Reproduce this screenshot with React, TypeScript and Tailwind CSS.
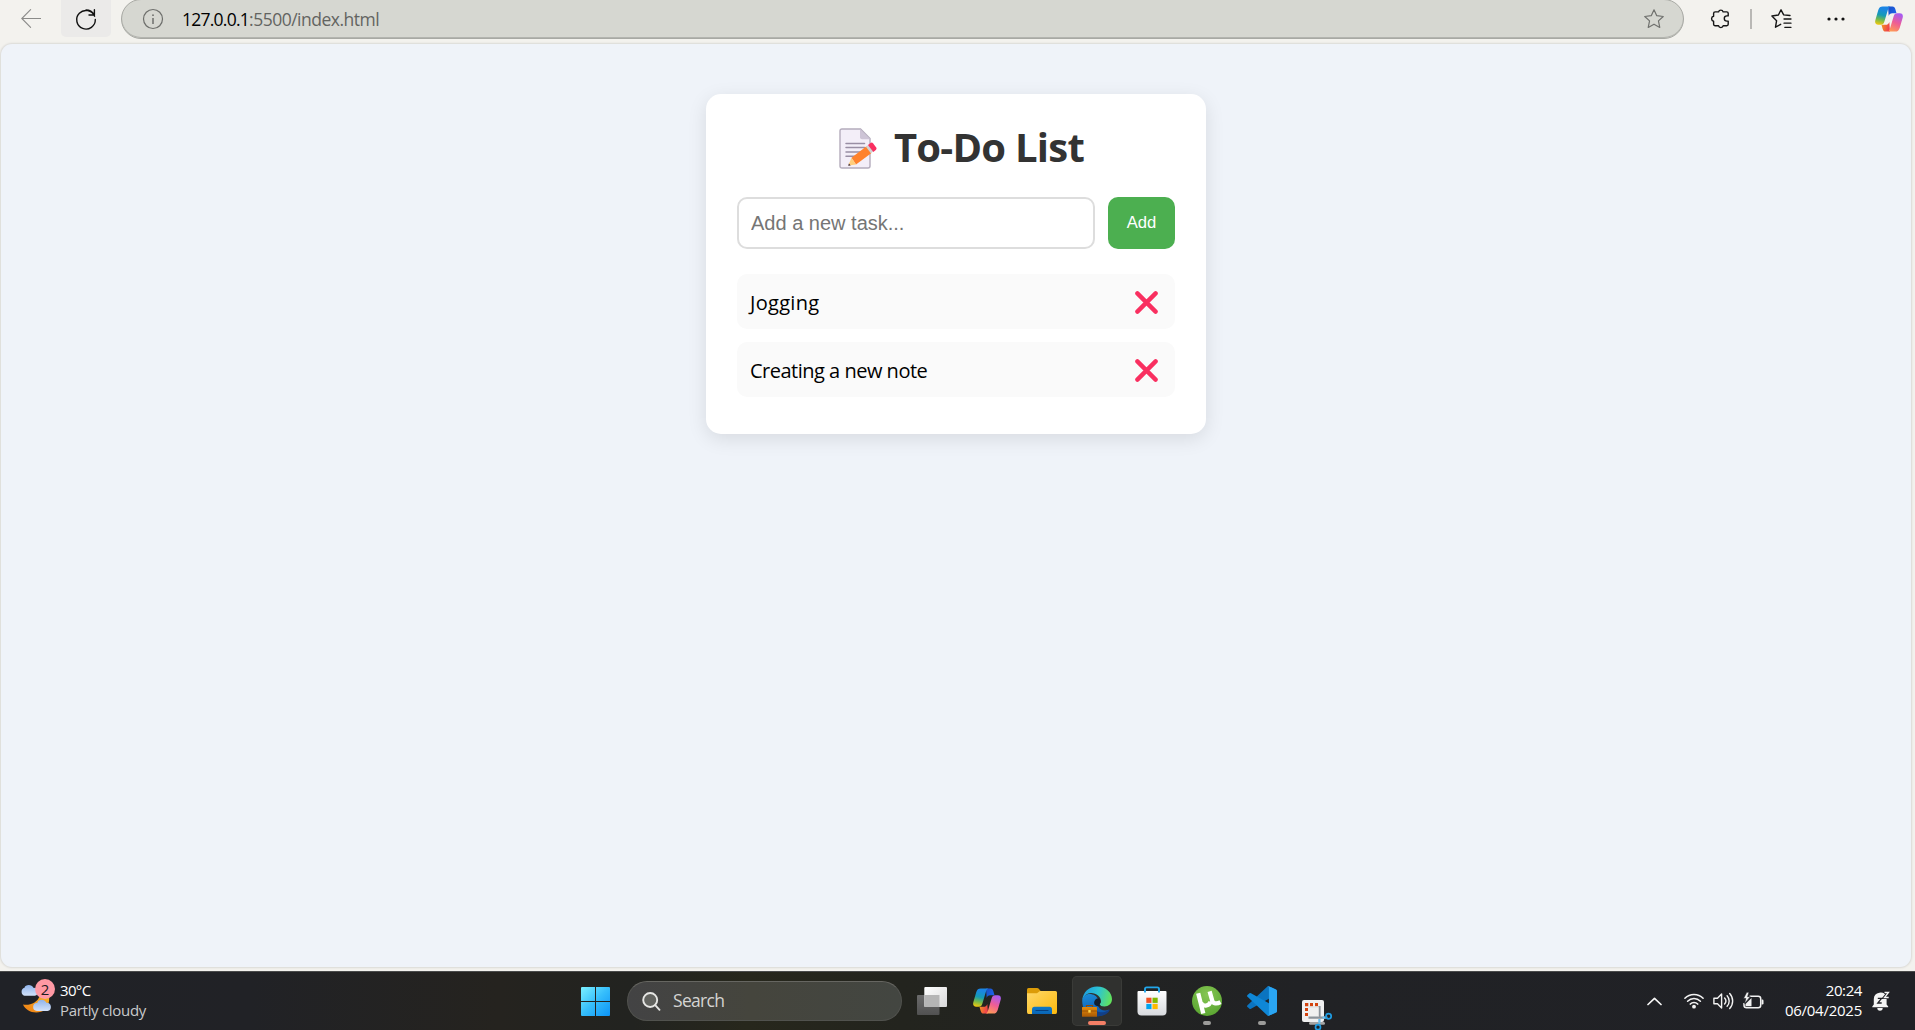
import type { ReactNode } from "react";

/* ---------- Browser toolbar icons ---------- */

function BackIcon() {
  return (
    <svg className="h-5 w-5" viewBox="0 0 20 20" fill="none" stroke="#8b8b89" strokeWidth="1.1" strokeLinecap="round">
      <path d="M0.8 9.5H20M9.6 0.7L0.8 9.5l8.8 8.8" />
    </svg>
  );
}

function ReloadIcon() {
  return (
    <svg className="h-5 w-5 overflow-visible" viewBox="0 0 20 20" fill="none" stroke="#111" strokeWidth="1.4" strokeLinecap="round" strokeLinejoin="round">
      <path d="M18.6 7.2A9.3 9.3 0 1 0 19.3 10.4M18.4 0.8v5.2h-5.4M18.2 5.8A9.3 9.3 0 0 0 10 0.9" />
    </svg>
  );
}

function InfoIcon() {
  return (
    <svg className="h-5 w-5 overflow-visible" viewBox="0 0 20 20" fill="none" stroke="#6d6e6b" strokeWidth="1.2">
      <circle cx="10" cy="10" r="9.5" />
      <path d="M10 9v6" strokeWidth="1.5" />
      <circle cx="10" cy="6.2" r="0.9" fill="#6d6e6b" stroke="none" />
    </svg>
  );
}

function StarIcon() {
  return (
    <svg className="h-5 w-5 overflow-visible" viewBox="0 0 20 20" fill="none" stroke="#70716e" strokeWidth="1.2" strokeLinejoin="round">
      <path d="M10 0.8l2.75 5.9 6.5.8-4.8 4.4 1.3 6.5L10 15.2l-5.75 3.2 1.3-6.5-4.8-4.4 6.5-.8z" />
    </svg>
  );
}

function PuzzleIcon() {
  return (
    <svg className="h-5 w-[18px] overflow-visible" viewBox="0 0 18 20" fill="none" stroke="#151515" strokeWidth="1.4" strokeLinejoin="round">
      <path d="M4.200 2.900h3.400a2.300 2.300 0 0 1 4.500 0h3.700q1.400 0 1.400 1.400v2.600h-1.300a2.600 2.600 0 0 0 0 5.200h1.300v3.200q0 1.400-1.400 1.400h-3.600a2.400 2.400 0 0 1-4.700 0H4q-1.400 0-1.400-1.400v-3.100a2.500 2.500 0 0 1 0-4.900V4.400q0-1.500 1.600-1.500z" />
    </svg>
  );
}

function FavoritesIcon() {
  return (
    <svg className="h-5 w-5 overflow-visible" viewBox="0 0 20 20" fill="none" stroke="#151515" strokeWidth="1.4" strokeLinejoin="round" strokeLinecap="round">
      <path d="M19 6.500l-6.300-.6L10 0.800 7.400 6 0.900 7l4.700 4.700-1.100 6.500 5.200-2.900" />
      <path d="M13 10h7M13 14.200h7M13.800 18.300h6.200" strokeWidth="1.300" />
    </svg>
  );
}

function DotsIcon() {
  return (
    <svg className="h-1 w-[18px]" viewBox="0 0 18 4" fill="#111">
      <circle cx="2" cy="2" r="1.6" />
      <circle cx="9" cy="2" r="1.6" />
      <circle cx="16" cy="2" r="1.6" />
    </svg>
  );
}

function CopilotIcon({ id, className }: { id: string; className: string }) {
  return (
    <svg className={className} viewBox="0 0 28 26">
      <defs>
        <linearGradient id={`${id}a`} x1="0.4" y1="0" x2="0.2" y2="1">
          <stop offset="0.1" stopColor="#1b86e4" />
          <stop offset="0.45" stopColor="#159bb5" />
          <stop offset="0.7" stopColor="#6fb850" />
          <stop offset="1" stopColor="#f5c90a" />
        </linearGradient>
        <linearGradient id={`${id}b`} x1="0.7" y1="0" x2="0.3" y2="1">
          <stop offset="0" stopColor="#a75bf2" />
          <stop offset="0.5" stopColor="#ee5d95" />
          <stop offset="1" stopColor="#ff9a55" />
        </linearGradient>
        <linearGradient id={`${id}c`} x1="0" y1="0" x2="1" y2="0.6">
          <stop offset="0" stopColor="#1a4fc4" />
          <stop offset="1" stopColor="#1d63ea" />
        </linearGradient>
        <linearGradient id={`${id}d`} x1="0" y1="0" x2="1" y2="0.3">
          <stop offset="0" stopColor="#f59a1c" />
          <stop offset="1" stopColor="#ee3e4d" />
        </linearGradient>
      </defs>
      <path d="M13 0.4h4.4c1.8 0 2.4 1 2.9 2.6l1.2 4.2h-4.2c-2 0-3 .9-3.6 2.8z" fill={`url(#${id}c)`} />
      <path d="M15 25.6h-4.3c-1.8 0-2.5-1-3-2.6l-1.2-4.2h4.2c2 0 3-.9 3.6-2.8z" fill={`url(#${id}d)`} />
      <path d="M7.7 0.4h7.8c-1.4.4-2 1.5-2.5 3.1l-3.6 12c-.7 2.3-1.6 3.2-3.6 3.2H3.2C.5 18.7-.4 16.700.4 14.100L3.300 4C4.100 1.500 5.300.400 7.700.400z" fill={`url(#${id}a)`} />
      <path d="M20.300 25.600h-7.800c1.400-.4 2-1.500 2.500-3.100l3.600-12c.7-2.300 1.600-3.200 3.600-3.200h2.600c2.700 0 3.600 2 2.800 4.600L24.700 22c-.8 2.500-2 3.600-4.400 3.600z" fill={`url(#${id}b)`} />
    </svg>
  );
}

/* ---------- To-do card icons ---------- */

function MemoIcon() {
  return (
    <svg className="h-[41px] w-[39px] shrink-0" viewBox="0 0 39 41">
      <path d="M3 1h18.500l9.500 9.500V38q0 2-2 2H3q-2 0-2-2V3q0-2 2-2z" fill="#f3eef8" stroke="#b4acbc" strokeWidth="1.4" />
      <path d="M21 1l10.300 10.300H23q-2 0-2-2z" fill="#cdc4d6" />
      <path d="M7 15.400h18.500M7 19.600h18.500M7 23.900h16M7 28.200h10" stroke="#998ea4" strokeWidth="1.5" strokeLinecap="round" />
      <path d="M12.500 29.800L27.500 18.300l5 6.600L17 36.500z" fill="#ff822d" />
      <path d="M12.500 29.800L9.600 36.700l.3.700L17 36.500z" fill="#ffce7c" />
      <path d="M9.900 35.500l1.800 2-2.500.2z" fill="#3b2a3a" />
      <path d="M26.900 18.700l2.500-2 5 6.600-2.500 1.900z" fill="#d3d3d3" />
      <path d="M29 16.900l2.500-1.900q1.500-1 2.700.5l3 4q1 1.400-.4 2.500l-2.500 1.900z" fill="#f92f60" />
    </svg>
  );
}

function CrossIcon() {
  return (
    <svg className="h-[23px] w-[23px]" viewBox="0 0 23 23" stroke="#f92f60" strokeWidth="4.400" strokeLinecap="round">
      <path d="M2.400 2.400l18.200 18.200M20.600 2.400L2.400 20.600" />
    </svg>
  );
}

/* ---------- Taskbar icons ---------- */

function WeatherIcon() {
  return (
    <svg className="h-[36px] w-[34px]" viewBox="0 0 34 36">
      <defs>
        <linearGradient id="moon" x1="1" y1="0" x2="0" y2="1">
          <stop offset="0" stopColor="#f8b32b" />
          <stop offset="1" stopColor="#f07f13" />
        </linearGradient>
        <linearGradient id="cloud" x1="0" y1="0" x2="0" y2="1">
          <stop offset="0" stopColor="#8fb3ea" />
          <stop offset="1" stopColor="#d3e2fa" />
        </linearGradient>
      </defs>
      <path d="M3 22.500C9 23.800 18 21 20 13l9 1c1 7-2 14-8 15.800C13 32 5.500 28.500 3 22.500z" fill="url(#moon)" />
      <path d="M4.500 13.800a4.200 4.200 0 0 1 0-8C5 2.300 12 1.800 13.300 5.800a4.100 4.100 0 0 1 1.500 8z" fill="url(#cloud)" />
      <path d="M17 29a4 4 0 0 1 .3-8c1-4.200 7.500-4.200 9-.3a4.200 4.200 0 0 1 1.200 8.300z" fill="url(#cloud)" />
    </svg>
  );
}

function StartIcon() {
  return (
    <svg className="h-[29px] w-[29px]" viewBox="0 0 29 29">
      <defs>
        <linearGradient id="win" gradientUnits="userSpaceOnUse" x1="0" y1="0" x2="29" y2="29">
          <stop offset="0" stopColor="#7cf0ff" />
          <stop offset="0.5" stopColor="#35bdfb" />
          <stop offset="1" stopColor="#0c93f7" />
        </linearGradient>
      </defs>
      <path d="M1 0h13v14H0V1q0-1 1-1zM15 0h13q1 0 1 1v13H15zM0 15h14v14H1q-1 0-1-1zM15 15h14v13q0 1-1 1H15z" fill="url(#win)" />
    </svg>
  );
}

function SearchIcon() {
  return (
    <svg className="h-[19px] w-[19px]" viewBox="0 0 19 19" fill="none" stroke="#e6e6e4" strokeWidth="1.900" strokeLinecap="round">
      <circle cx="8.200" cy="8" r="7" fill="#62635f" />
      <path d="M13.200 13.200l4.300 4.600" />
    </svg>
  );
}

function TaskViewIcon() {
  return (
    <svg className="h-[30px] w-[30px]" viewBox="0 0 30 30">
      <defs>
        <linearGradient id="tv" x1="0" y1="0" x2="1" y2="1">
          <stop offset="0" stopColor="#fff" />
          <stop offset="1" stopColor="#d9d9d9" />
        </linearGradient>
        <linearGradient id="tvb" x1="0" y1="0" x2="0" y2="1">
          <stop offset="0" stopColor="#6b6b6b" />
          <stop offset="1" stopColor="#515151" />
        </linearGradient>
      </defs>
      <rect x="0" y="9" width="22.500" height="20" rx="1" fill="url(#tvb)" />
      <rect x="7.300" y="1" width="22.700" height="20" rx="1" fill="url(#tv)" />
      <path d="M7.300 9h15.200v12H8.300q-1 0-1-1z" fill="#b5b5b5" />
    </svg>
  );
}

function FolderIcon() {
  return (
    <svg className="h-[28px] w-[30px]" viewBox="0 0 30 28">
      <defs>
        <linearGradient id="fold" x1="0" y1="0" x2="1" y2="1">
          <stop offset="0" stopColor="#ffd869" />
          <stop offset="1" stopColor="#fbb90d" />
        </linearGradient>
        <linearGradient id="foldb" x1="0" y1="0" x2="0" y2="1">
          <stop offset="0" stopColor="#0d7ac9" />
          <stop offset="1" stopColor="#0a64b4" />
        </linearGradient>
      </defs>
      <path d="M1.500 1h8.600q1 0 1.700.8l2.200 2.700v3H0v-5Q0 1 1.500 1z" fill="#dc9c08" />
      <path d="M0 6.200h10l3-2.200h15.500Q30 4 30 5.500V25q0 2-1.500 2h-27Q0 27 0 25z" fill="url(#fold)" />
      <path d="M5 27v-4.800q0-2.500 2.500-2.500h15q2.500 0 2.500 2.500V27z" fill="url(#foldb)" />
      <path d="M9 23.500h12" stroke="#053f80" strokeWidth="1.200" strokeLinecap="round" />
    </svg>
  );
}

function EdgeIcon() {
  return (
    <svg className="h-[31px] w-[30px]" viewBox="0 0 30 31">
      <defs>
        <linearGradient id="eg1" x1="0" y1="0.300" x2="1" y2="0.500">
          <stop offset="0" stopColor="#1c9be0" />
          <stop offset="0.500" stopColor="#2cc3d4" />
          <stop offset="1" stopColor="#62e35c" />
        </linearGradient>
        <linearGradient id="eg2" x1="0" y1="0" x2="0.300" y2="1">
          <stop offset="0" stopColor="#1b8fdc" />
          <stop offset="1" stopColor="#0d55ac" />
        </linearGradient>
        <linearGradient id="eg3" x1="0" y1="0" x2="0" y2="1">
          <stop offset="0" stopColor="#e58b0c" />
          <stop offset="1" stopColor="#a95a05" />
        </linearGradient>
      </defs>
      <path d="M0.200 14.500C.2 22 3.500 27 9 29.500c6 2 14 .8 18.300-6-4.500 2.500-9.500.5-11-3-1.500-3-.8-5 .2-6.500-1.500-4-5-6-9-6-3.500 0-6.500 2.500-7.300 6.500z" fill="url(#eg2)" />
      <path d="M11.500 20c1.500 6.500 9 8.500 15.300 3.700.8-.4 1 .1.700.8C25 29 20 30.500 15 30z" fill="#123f86" />
      <path d="M0.200 14.500C1 6 7 .5 15 .5c9 0 15 6.200 15 12.800 0 4.500-3.500 7.200-7.500 7.200-2.800 0-4.800-1-4.800-2 0-.8 1.200-1.400 1.200-3.600 0-4-4.300-8-9.900-8-3.800 0-7.500 3-8.800 7.600z" fill="url(#eg1)" />
      <path d="M12.200 17.500c-.3-2.800 1.500-5 4-5.200 1.500.3 2.600 2.200 2.400 3.600-.2 1.300-1 1.800-1 2.600 0 .6.600 1 1.400 1.300-2.800 1.200-6.400.200-6.800-2.300z" fill="#141f2e" />
      <path d="M4.500 22v-2.500h6V22" fill="none" stroke="#8e4b05" strokeWidth="1.200" />
      <rect x="0" y="21" width="15" height="9.800" rx="0.600" fill="url(#eg3)" />
      <path d="M0 25h15" stroke="#8a4a04" strokeWidth="0.800" />
      <rect x="6.300" y="24" width="2.400" height="2.600" fill="#ffd54a" />
    </svg>
  );
}

function StoreIcon() {
  return (
    <svg className="h-[30px] w-[30px]" viewBox="0 0 30 30">
      <defs>
        <linearGradient id="st" x1="0" y1="0" x2="0" y2="1">
          <stop offset="0" stopColor="#fff" />
          <stop offset="1" stopColor="#d8dade" />
        </linearGradient>
      </defs>
      <path d="M.5 6q0-1 1-1h27q1 0 1 1v19.500q0 4-4 4h-21q-4 0-4-4z" fill="url(#st)" />
      <path d="M8 6.500V3q0-1.600 1.600-1.600h10.800Q22 1.400 22 3v3.500" fill="none" stroke="#22a6ea" strokeWidth="1.900" />
      <path d="M9.300 11.700h5.200v5.200H9.300z" fill="#f25022" />
      <path d="M15.500 11.700h5.200v5.200h-5.200z" fill="#7fba00" />
      <path d="M9.300 17.900h5.200v5.200H9.300z" fill="#00a4ef" />
      <path d="M15.500 17.900h5.200v5.200h-5.200z" fill="#ffb900" />
    </svg>
  );
}

function TorrentIcon() {
  return (
    <svg className="h-[30px] w-[30px]" viewBox="0 0 30 30">
      <defs>
        <radialGradient id="ut" cx="0.500" cy="0.300" r="0.700">
          <stop offset="0" stopColor="#86c653" />
          <stop offset="1" stopColor="#5ba632" />
        </radialGradient>
      </defs>
      <circle cx="15" cy="15" r="15" fill="url(#ut)" />
      <path d="M6.200 7.200L11.300 27.600M9 16.500c1.300 4.300 8.600 4.200 9.400-1M17.600 5.400l2.700 9.400c.9 2.900 4.300 3.400 8.200 1.300" fill="none" stroke="#fff" strokeWidth="4.300" />
    </svg>
  );
}

function VSCodeIcon() {
  return (
    <svg className="h-[30px] w-[30px]" viewBox="0 0 30 30">
      <path d="M21.700.2L29 3.600q1 .5 1 1.500v3L4 22.800q-.8.500-1.500 0L.5 21q-.9-.9 0-1.700L20.400.6q.6-.5 1.300-.4z" fill="#0b74c0" />
      <path d="M21.700 29.800L29 26.400q1-.5 1-1.500v-3L4 7.200q-.8-.5-1.500 0L.5 9q-.9.9 0 1.700l19.900 18.700q.6.500 1.300.4z" fill="#0f87d6" />
      <path d="M21.700.2L29 3.600q1 .5 1 1.500v19.800q0 1-1 1.500l-7.300 3.400q-.9.300-1.300-.3 1.500.6 1.500-1.200V1.700q0-1.800-1.500-1.200.4-.5 1.300-.3z" fill="#2aa5f2" />
    </svg>
  );
}

function SnipIcon() {
  return (
    <svg className="h-[30px] w-[30px]" viewBox="0 0 30 30">
      <rect x="0" y="0" width="22" height="22" rx="2" fill="#f0f0f1" />
      <rect x="7" y="22" width="16" height="2.800" rx="1.400" fill="#a5a5a5" />
      <path d="M3 3h3.300v3.300H3zM8 3h3v3.300H8zM13 3h3v3.300h-3zM3 8h3v3H3zM3 13h3v3H3z" fill="#d4430f" />
      <path d="M17.500 6v12.500M6.500 17.700h19" stroke="#8c939b" strokeWidth="2.200" />
      <path d="M7 7h9.500v9.500" fill="none" stroke="#dadbdd" strokeWidth="1" />
      <path d="M17.400 19v4.500M20.500 17.700h3" stroke="#6cc0ee" strokeWidth="2.200" />
      <circle cx="26.600" cy="16.200" r="2.600" fill="none" stroke="#1e9be2" strokeWidth="1.700" />
      <circle cx="16" cy="27.200" r="2.500" fill="none" stroke="#1e9be2" strokeWidth="1.700" />
    </svg>
  );
}

function ChevronUpIcon() {
  return (
    <svg className="h-[9px] w-[15px]" viewBox="0 0 15 9" fill="none" stroke="#f5f5f5" strokeWidth="1.700" strokeLinecap="round" strokeLinejoin="round">
      <path d="M1 7.500L7.500 1.300 14 7.500" />
    </svg>
  );
}

function WifiIcon() {
  return (
    <svg className="h-4 w-5" viewBox="0 0 20 16" fill="none" stroke="#f2f2f2" strokeWidth="1.500" strokeLinecap="round">
      <path d="M.9 5.300a12.600 12.600 0 0 1 18.200 0M3.600 8.300a8.800 8.800 0 0 1 12.800 0M6.300 11.100a5 5 0 0 1 7.400 0" />
      <circle cx="10" cy="13.700" r="1.900" fill="#f2f2f2" stroke="none" />
    </svg>
  );
}

function SpeakerIcon() {
  return (
    <svg className="h-[18px] w-[21px]" viewBox="0 0 21 18" fill="none" stroke="#f2f2f2" strokeWidth="1.400" strokeLinecap="round" strokeLinejoin="round">
      <path d="M.9 6.200h3.600L8.600 2v14l-4.100-4.200H.9z" />
      <path d="M11.600 6a4.500 4.500 0 0 1 0 6M14.100 3.700a7.800 7.800 0 0 1 0 10.600M16.700 1.500a11 11 0 0 1 0 15" />
    </svg>
  );
}

function BatteryIcon() {
  return (
    <svg className="h-[18px] w-[21px]" viewBox="0 0 21 18">
      <path d="M6.500 4.200h8.700q2.500 0 2.500 2.500v6.500q0 2.500-2.500 2.500H3.500Q1 15.700 1 13.200V11" fill="none" stroke="#f2f2f2" strokeWidth="1.500" />
      <path d="M18.600 7.500h.7q1.200 0 1.200 1.200v2.500q0 1.200-1.200 1.200h-.7z" fill="#f2f2f2" />
      <path d="M2.500 14.200V12L8.500 6v8.200z" fill="#f2f2f2" />
      <path d="M3.700.3L.5 6.500h2.300L1.600 11.500 7.300 4.700H4.600L6 .3z" fill="#f2f2f2" stroke="#202126" strokeWidth="0.600" />
    </svg>
  );
}

function BellIcon() {
  return (
    <svg className="h-5 w-[18px] overflow-visible" viewBox="0 0 18 20">
      <path d="M1.800 13.500V8a6.600 6.600 0 0 1 12.800-2v7.500l1.600 2v.700H.3v-.7z" fill="#f4f4f4" />
      <path d="M5.300 17h5.400a2.700 2.700 0 0 1-5.400 0z" fill="#f4f4f4" />
      <path d="M5.800 7.300h3.700L5.800 12h3.900" fill="none" stroke="#202126" strokeWidth="1.300" />
      <path d="M12.300 1.500h4.200l-4.200 5h4.400" fill="none" stroke="#202126" strokeWidth="2.900" />
      <path d="M12.500 1.500h4l-4 5h4.200" fill="none" stroke="#f4f4f4" strokeWidth="1.300" />
    </svg>
  );
}

/* ---------- Layout ---------- */

function Toolbar() {
  return (
    <header className="flex h-11 shrink-0 items-start">
      <div className="ml-[21px] flex h-[37px] w-5 items-center">
        <BackIcon />
      </div>
      <button className="ml-5 flex h-[37px] w-[50px] items-center justify-center rounded-b-[5px] bg-[#ebeae9]">
        <ReloadIcon />
      </button>
      <div className="-mt-px ml-2.5 flex h-10 w-[1563px] items-center rounded-full border border-[#a8a9a4] bg-[#d6d7d1] pr-[19px] pl-[21px] shadow-[inset_0_-1px_0_#b3b4af]">
        <InfoIcon />
        <div className="ml-[19px] flex grow pb-px text-[17.5px] leading-6">
          <span className="tracking-[-0.75px] text-black">127.0.0.1</span>
          <span className="tracking-[-0.5px] text-[#636461]">:5500/index.html</span>
        </div>
        <StarIcon />
      </div>
      <div className="ml-[27px] flex h-[38px] items-center">
        <PuzzleIcon />
        <div className="ml-[21px] h-5 w-[1.5px] bg-[#b9b8b5]" />
        <div className="ml-[19px] flex">
          <FavoritesIcon />
        </div>
        <div className="ml-9 flex">
          <DotsIcon />
        </div>
        <CopilotIcon id="tb" className="ml-[30px] h-[26px] w-7" />
      </div>
    </header>
  );
}

function TaskRow({ text }: { text: string }) {
  return (
    <li className="flex h-[55px] items-center justify-between rounded-[10px] bg-[#fafafa] pr-[17px] pl-[13px]">
      <span className={text === "Jogging" ? "pt-0.5 text-[20px] tracking-[0.3px]" : "pt-0.5 text-[20px] tracking-[-0.5px]"}>{text}</span>
      <div className="pt-0.5">
        <CrossIcon />
      </div>
    </li>
  );
}

function TodoCard() {
  return (
    <section className="h-[340px] w-[500px] rounded-[15px] bg-white px-[31px] pt-[26px] shadow-[0_5px_19px_rgba(0,0,0,0.1)]">
      <h1 className="flex h-[56px] items-center justify-center pl-[11px] text-[40px] font-bold tracking-[-0.75px] text-[#333]">
        <MemoIcon />
        <span className="ml-4 pb-0.5">To-Do List</span>
      </h1>
      <div className="mt-[21px] flex gap-[13px]">
        <input
          className="h-[52px] w-[358px] rounded-[10px] border-2 border-[#ddd] bg-white px-3 font-['Liberation_Sans',sans-serif] text-[20px] placeholder:text-[#757575]"
          placeholder="Add a new task..."
        />
        <button className="h-[52px] w-[67px] rounded-[10px] bg-[#4caf50] pb-0.5 font-['Liberation_Sans',sans-serif] text-[16.67px] text-white">Add</button>
      </div>
      <ul className="mt-[25px] flex flex-col gap-[13px]">
        <TaskRow text="Jogging" />
        <TaskRow text="Creating a new note" />
      </ul>
    </section>
  );
}

function AppSlot({ children, state = "closed" }: { children: ReactNode; state?: "closed" | "running" | "active" }) {
  return (
    <div
      className={
        state === "active"
          ? "relative flex h-[50px] w-[50px] items-center justify-center rounded-[5px] bg-[#30312f] ring-1 ring-[#3a3b38] ring-inset"
          : "relative flex h-[50px] w-[50px] items-center justify-center"
      }
    >
      {children}
      {state === "active" && <span className="absolute bottom-px left-4 h-1 w-[18px] rounded-full bg-[#f47f66]" />}
      {state === "running" && <span className="absolute bottom-px left-[21px] h-1 w-2 rounded-full bg-[#9c9c9a]" />}
    </div>
  );
}

function Taskbar() {
  return (
    <footer className="flex h-[59px] shrink-0 border-t border-[#4a4b4b] bg-[linear-gradient(90deg,#202227_0%,#212226_13%,#25231f_26%,#222320_33%,#27271c_39%,#23241e_47%,#222322_58%,#212225_68%,#202126_100%)] text-white">
      <div className="flex w-[570px] pt-[8px] pl-[20px]">
        <div className="relative h-[38px] w-[34px]">
          <div className="pt-[2px]">
            <WeatherIcon />
          </div>
          <span className="absolute -top-px left-[15px] flex h-5 w-5 items-center justify-center rounded-full bg-[#ff99a4] text-[15px] text-[#1d1d1f]">2</span>
        </div>
        <div className="ml-[6px] text-[15px] leading-5">
          <div className="tracking-[-0.65px]">30°C</div>
          <div className="tracking-[-0.3px] text-[#c9cacb]">Partly cloudy</div>
        </div>
      </div>
      <div className="flex gap-[5px] pt-1">
        <AppSlot>
          <StartIcon />
        </AppSlot>
        <div className="mt-[5px] ml-[2px] flex h-10 w-[275px] items-center rounded-full border border-[#51524e] border-t-[#666661] bg-[linear-gradient(90deg,#434344,#45453d_45%,#434641)] pl-[14px]">
          <SearchIcon />
          <span className="ml-3 pb-px text-[17.5px] tracking-[-0.7px] text-[#d4d4d2]">Search</span>
        </div>
        <AppSlot>
          <TaskViewIcon />
        </AppSlot>
        <AppSlot>
          <CopilotIcon id="bar" className="h-[26px] w-7" />
        </AppSlot>
        <AppSlot>
          <FolderIcon />
        </AppSlot>
        <AppSlot state="active">
          <EdgeIcon />
        </AppSlot>
        <AppSlot>
          <StoreIcon />
        </AppSlot>
        <AppSlot state="running">
          <TorrentIcon />
        </AppSlot>
        <AppSlot state="running">
          <VSCodeIcon />
        </AppSlot>
        <div className="flex h-[54px] w-[50px] items-end justify-center">
          <SnipIcon />
        </div>
      </div>
      <div className="ml-auto flex h-[58px] items-center">
        <ChevronUpIcon />
        <div className="ml-[22px] flex">
          <WifiIcon />
        </div>
        <div className="ml-[9px] flex">
          <SpeakerIcon />
        </div>
        <div className="ml-[9px] flex">
          <BatteryIcon />
        </div>
        <div className="w-[98px] pb-0.5 text-right text-[15px] leading-5">
          <div className="tracking-[-0.4px]">20:24</div>
          <div className="tracking-[-0.25px]">06/04/2025</div>
        </div>
        <div className="mr-[25px] ml-[10px] flex">
          <BellIcon />
        </div>
      </div>
    </footer>
  );
}

export default function App() {
  return (
    <div className="flex h-[1030px] w-[1915px] flex-col overflow-hidden bg-[#f3f2ee] font-['Open_Sans','Noto_Sans',sans-serif]">
      <Toolbar />
      <main className="mr-1 mb-1 ml-px flex grow justify-center rounded-[11px] bg-[#eff3f9] pt-[50px] shadow-[0_0_2px_1px_rgba(0,0,0,0.1)]">
        <TodoCard />
      </main>
      <Taskbar />
    </div>
  );
}
